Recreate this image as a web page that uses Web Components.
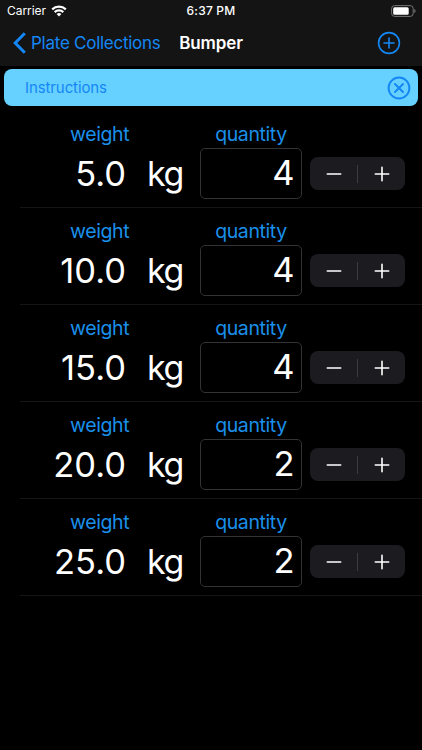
<!DOCTYPE html>
<html lang="en">
<head>
<meta charset="utf-8">
<title>Bumper</title>
<style>
html,body{margin:0;background:#000}
body{width:422px;height:750px;overflow:hidden;font-family:Inter,"Liberation Sans",sans-serif;color:#fff}
</style>
</head>
<body>
<plate-app></plate-app>
<script>
const define = (name, html, setup) => customElements.define(name, class extends HTMLElement {
  connectedCallback() {
    if (this.shadowRoot) return;
    this.attachShadow({mode: 'open'}).innerHTML = html;
    if (setup) setup(this, this.shadowRoot);
  }
});

define('status-bar', `<style>
:host{display:grid;grid-template-columns:1fr auto 1fr;height:22px;align-items:center;padding:0 6px;font-size:12px;line-height:22px;box-sizing:border-box}
.left{display:flex;align-items:center;gap:5px;margin-left:1px}
.left span{letter-spacing:-.05px}
.time{font-weight:500;letter-spacing:.2px}
.battery{justify-self:end;margin:-1px 0 0}
svg{display:block}
</style>
<div class="left"><span>Carrier</span><svg width="16" height="12" viewBox="0 0 16 12" fill="none" stroke="#fff" stroke-width="2.200"><path d="M1.200 4.400C5 .8 11 .8 14.800 4.400M3.700 7.100C6.100 4.900 9.900 4.900 12.300 7.100"/><path d="M8 11.500 5.600 9Q8 7.100 10.400 9Z" fill="#fff" stroke="none"/></svg></div>
<span class="time">6:37 PM</span>
<svg class="battery" width="25" height="12" viewBox="0 0 25 12"><rect x=".6" y=".6" width="21.600" height="10.800" rx="3" fill="none" stroke="#77777a"/><rect x="2.200" y="2.200" width="15.500" height="7.600" rx="1.500" fill="#fff"/><path d="M23.300 4v4q1.300-.6 1.300-2t-1.300-2" fill="#77777a"/></svg>`);

define('nav-bar', `<style>
:host{display:grid;grid-template-columns:1fr auto 1fr;height:42px;align-items:center;padding:0 21px;color:#1587f5;box-sizing:border-box}
.back{display:flex;align-items:center;gap:5px;font-size:17px;letter-spacing:-.26px;white-space:nowrap;width:0;margin-left:-8px}
.title{color:#fff;font-size:17px;font-weight:600;letter-spacing:-.1px}
.add{justify-self:end}
svg{display:block;flex:none}
</style>
<div class="back"><svg width="13" height="22" viewBox="0 0 13 22" fill="none" stroke="currentColor" stroke-width="3"><path d="M11.800 1.200 2.200 11l9.600 9.800"/></svg><span>Plate Collections</span></div>
<span class="title"><slot></slot></span>
<svg class="add" width="24" height="24" viewBox="0 0 24 24" fill="none" stroke="currentColor" stroke-width="1.600" stroke-linecap="round"><circle cx="12" cy="12" r="10.400"/><path d="M12 7v10M7 12h10"/></svg>`);

define('info-banner', `<style>
:host{display:flex;justify-content:space-between;align-items:center;box-sizing:border-box;height:37px;margin:3px 4px 0;padding:0 7px 0 21px;border-radius:8px;background:#66d1ff;color:#1587f5;font-size:15px;letter-spacing:-.1px}
svg{display:block}
</style><span><slot></slot></span>
<svg width="24" height="24" viewBox="0 0 24 24" fill="none" stroke="currentColor" stroke-width="2" stroke-linecap="round"><circle cx="12" cy="12" r="10.400"/><path d="m8 8 8 8M16 8l-8 8"/></svg>`);

define('count-stepper', `<style>
:host{display:grid;grid-template-columns:1fr 1px 1fr;align-items:center;justify-items:center;width:95px;height:33px;border-radius:8px;background:#1c1b20}
i{width:1px;height:18px;background:#3c3b40}
svg{display:block}
</style>
<svg width="16" height="16" stroke="#fff" stroke-width="1.600" stroke-linecap="round"><path d="M1.300 8h13.400"/></svg><i></i>
<svg width="16" height="16" stroke="#fff" stroke-width="1.600" stroke-linecap="round"><path d="M1.300 8h13.400M8 1.300v13.400"/></svg>`);

define('plate-row', `<style>
:host{display:grid;grid-template-columns:106px 74px 102px 8px 95px;grid-template-rows:24px 51px;row-gap:2px;box-sizing:border-box;height:97px;margin-left:20px;padding-top:11px;border-bottom:1px solid #151517}
.label{color:#1a8fea;font-size:19.500px;line-height:24px;letter-spacing:-.4px;white-space:nowrap;grid-row:1}
.w{padding-left:50px;grid-column:1}
.q{grid-column:3;justify-self:center}
.num,.unit,.box{font-size:34.500px;line-height:51px;grid-row:2}
.num{text-align:right;grid-column:1}
.unit{padding-left:21px;grid-column:2;letter-spacing:-1.500px;font-size:34px}
.box{grid-column:3;box-sizing:border-box;height:51px;border:1px solid #333335;border-radius:5px;text-align:right;padding-right:6.500px;line-height:48px}
count-stepper{grid-column:5;grid-row:2;margin-top:9px}
</style>
<span class="label w">weight</span><span class="label q">quantity</span>
<span class="num"></span><span class="unit">kg</span><span class="box"></span><count-stepper></count-stepper>`,
(host, root) => {
  root.querySelector('.num').textContent = host.getAttribute('weight');
  root.querySelector('.box').textContent = host.getAttribute('quantity');
});

define('plate-app', `<style>
:host{display:block;height:750px;background:#000}
header{background:#141414;height:66px}
main{padding-top:5px}
</style>
<header><status-bar></status-bar><nav-bar>Bumper</nav-bar></header>
<info-banner>Instructions</info-banner>
<main>
<plate-row weight="5.0" quantity="4"></plate-row>
<plate-row weight="10.0" quantity="4"></plate-row>
<plate-row weight="15.0" quantity="4"></plate-row>
<plate-row weight="20.0" quantity="2"></plate-row>
<plate-row weight="25.0" quantity="2"></plate-row>
</main>`);
</script>
</body>
</html>
